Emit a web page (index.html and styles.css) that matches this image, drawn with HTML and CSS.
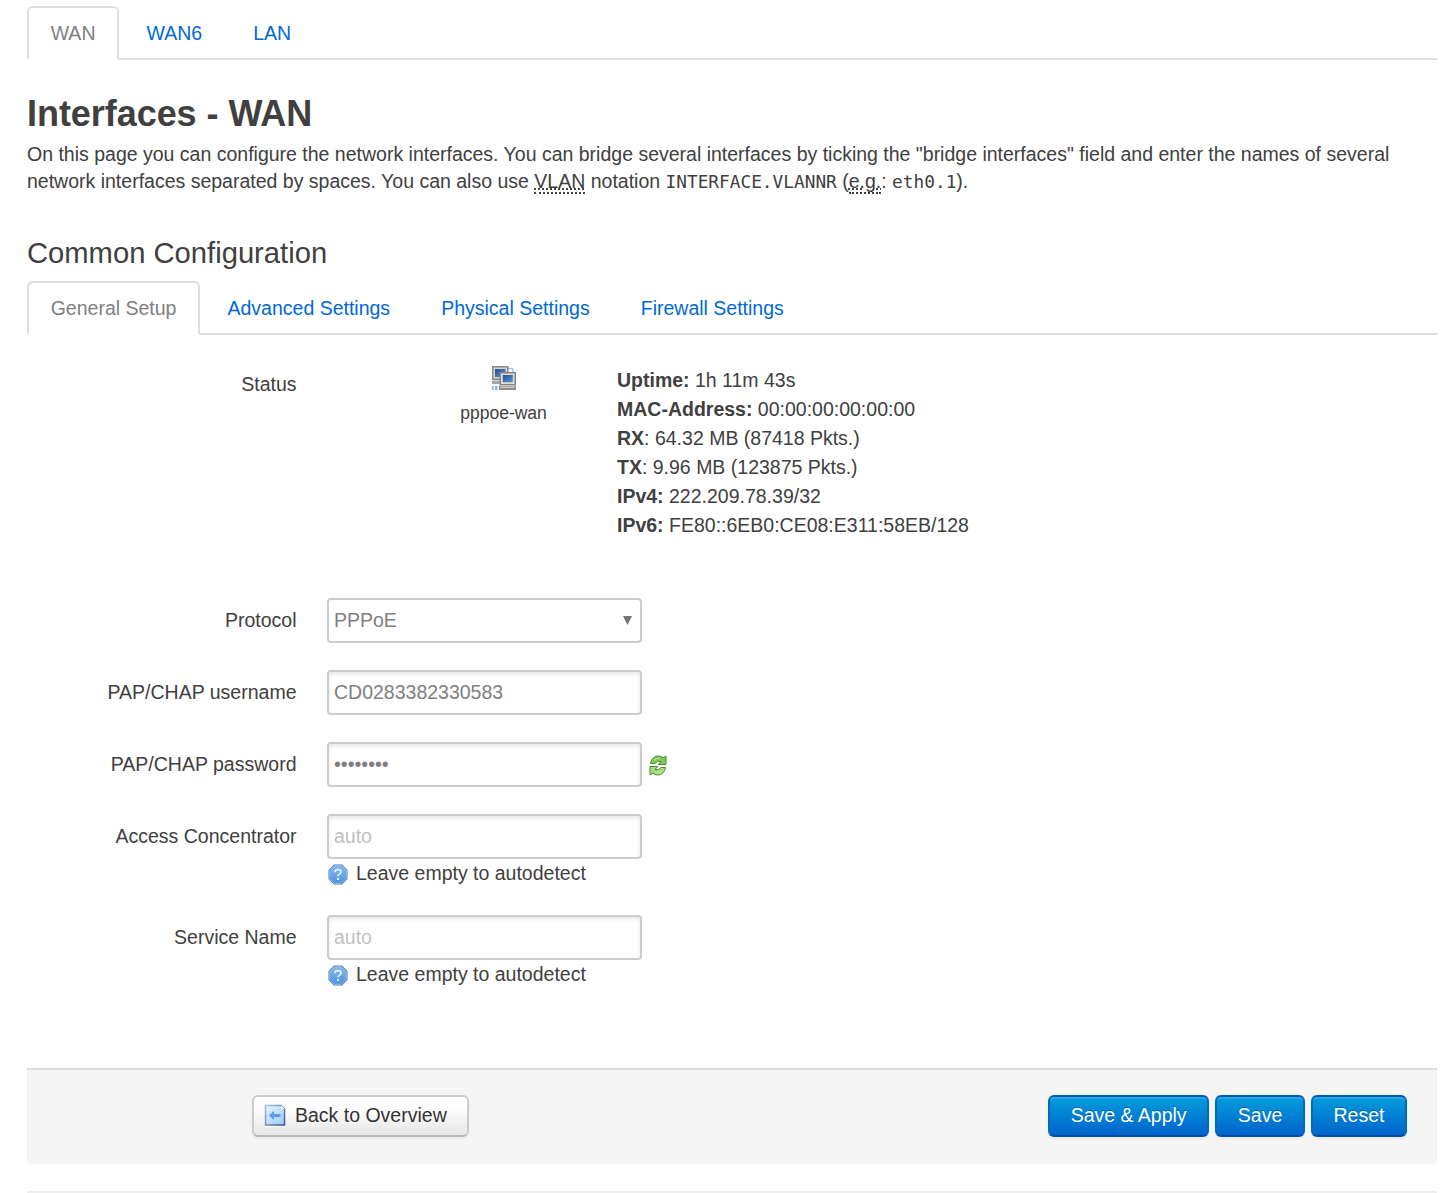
FILE: index.html
```html
<!DOCTYPE html>
<html lang="en">
<head>
<meta charset="utf-8">
<title>Interfaces - WAN</title>
<link rel="stylesheet" href="styles.css">
</head>
<body>
<svg class="sprite" width="0" height="0" aria-hidden="true">
  <symbol id="help" viewBox="0 0 20 21">
    <path d="M6 .5h8L19.500 6v9L14 20.500H6L.5 15V6z" fill="#54779c"/>
    <path d="M6.500 1.700h7L18.300 6.500v8l-4.800 4.800h-7L1.700 14.500v-8z" fill="url(#helpFill)" stroke="#8fc1f0"/>
    <path d="M7 8.200q0-2.500 3-2.500t3 2.300q0 1.500-1.700 2.300-1.300.7-1.300 1.900" fill="none" stroke="#e4f0fd" stroke-width="1.800"/>
    <path d="M9 14h2v2H9z" fill="#e4f0fd"/>
  </symbol>
  <defs>
    <linearGradient id="helpFill" x2="0" y2="1"><stop stop-color="#83b9f1"/><stop offset="1" stop-color="#4f94de"/></linearGradient>
    <linearGradient id="screen" x2="1" y2="1"><stop stop-color="#1f4f94"/><stop offset="1" stop-color="#5c94d6"/></linearGradient>
    <linearGradient id="page" x2="1" y2="1"><stop stop-color="#e8f4ff"/><stop offset="1" stop-color="#9cc9fb"/></linearGradient>
    <linearGradient id="pageEdge" x2="1" y2="1"><stop stop-color="#a9c8e0"/><stop offset="1" stop-color="#35557f"/></linearGradient>
  </defs>
</svg>
<main class="container">
  <ul class="tabs">
    <li class="active"><a>WAN</a></li>
    <li><a>WAN6</a></li>
    <li><a>LAN</a></li>
  </ul>

  <h2>Interfaces - WAN</h2>
  <p class="description">On this page you can configure the network interfaces. You can bridge several interfaces by ticking the "bridge interfaces" field and enter the names of several<br>network interfaces separated by spaces. You can also use <abbr>VLAN</abbr> notation <code>INTERFACE.VLANNR</code> (<abbr>e.g.</abbr>: <code>eth0.1</code>).</p>

  <h3>Common Configuration</h3>
  <ul class="tabs">
    <li class="active"><a>General Setup</a></li>
    <li><a>Advanced Settings</a></li>
    <li><a>Physical Settings</a></li>
    <li><a>Firewall Settings</a></li>
  </ul>

  <form class="form">
    <div class="row status">
      <span class="label">Status</span>
      <div class="device">
        <svg width="24" height="24" viewBox="0 0 24 24">
          <path d="M16 2.500h3.500q1.500 0 1.500 2V7" fill="none" stroke="#9fc1ec" stroke-width="1.500"/>
          <path d="M0 0h16.500v14H0z" fill="#8b8b86"/><path d="M1.500 1.500h13.500v11h-13.500z" fill="#d5d4cd"/>
          <path d="M3 3h10.500v8H3z" fill="url(#screen)"/>
          <path d="M0 14.500h9V18H0z" fill="#aaa9a3"/>
          <path d="M0 20h1.500v4H0zM3 20h2.500v4H3z" fill="#86b2eb"/>
          <path d="M7.500 6H24v13H7.500z" fill="#85857f"/><path d="M9 7.500h13.500v10.500H9z" fill="#dddcd5"/>
          <path d="M10.800 9h10v7.200h-10z" fill="url(#screen)"/>
          <path d="M7 19.500h17V24H7z" fill="#8f8e88"/><path d="M8.500 20.500h14V22h-14z" fill="#cac9c2"/>
        </svg>
        <span>pppoe-wan</span>
      </div>
      <div class="info">
        <div><b>Uptime:</b> 1h 11m 43s</div>
        <div><b>MAC-Address:</b> 00:00:00:00:00:00</div>
        <div><b>RX</b>: 64.32 MB (87418 Pkts.)</div>
        <div><b>TX</b>: 9.96 MB (123875 Pkts.)</div>
        <div><b>IPv4:</b> 222.209.78.39/32</div>
        <div><b>IPv6:</b> FE80::6EB0:CE08:E311:58EB/128</div>
      </div>
    </div>
    <div class="row">
      <span class="label">Protocol</span>
      <div class="field select"><span>PPPoE</span><svg width="9" height="9" viewBox="0 0 9 9"><path d="M0 0h9L4.500 9z" fill="#757575"/></svg></div>
    </div>
    <div class="row">
      <label class="label" for="user">PAP/CHAP username</label>
      <input class="field" id="user" type="text" value="CD0283382330583">
    </div>
    <div class="row">
      <label class="label" for="pass">PAP/CHAP password</label>
      <div class="field"><span class="dots">••••••••</span></div>
      <svg class="reload" width="18" height="21" viewBox="0 0 18 21">
        <path d="M1.500 8.500C2.500 3.500 5.500 1 9.500 1q2.800 0 4.500 1.900L17 1v8.500H9.300l2.700-2.900Q8.500 5 6 8.500z" fill="#7cc957" stroke="#4c8a34"/>
        <path d="M16.500 12.500c-1 5-4 7.500-8 7.500q-2.800 0-4.500-1.900L1 20v-8.500h7.700L6 14.400q3.500 1.600 6-1.900z" fill="#a3de80" stroke="#4c8a34"/>
        <path d="M5 5.500q2-2.800 5.500-2.300M13 16q-2 2.300-5 1.900" fill="none" stroke="#c4eeaa"/>
      </svg>
    </div>
    <div class="row">
      <label class="label" for="ac">Access Concentrator</label>
      <div>
        <input class="field" id="ac" type="text" placeholder="auto">
        <div class="hint"><svg width="20" height="21"><use href="#help"/></svg>Leave empty to autodetect</div>
      </div>
    </div>
    <div class="row">
      <label class="label" for="service">Service Name</label>
      <div>
        <input class="field" id="service" type="text" placeholder="auto">
        <div class="hint"><svg width="20" height="21"><use href="#help"/></svg>Leave empty to autodetect</div>
      </div>
    </div>
  </form>

  <div class="actions">
    <button class="btn" type="button">
      <svg width="22" height="23" viewBox="0 0 22 23">
        <path d="M0 0h22v23H0z" fill="#f4f8fc"/>
        <path d="M1.500 1.500H17L20.500 5v16h-19z" fill="url(#page)" stroke="url(#pageEdge)" stroke-width="1.500"/>
        <path d="M17 1.500V5h3.500z" fill="#fff"/>
        <path d="M5 11.500l5-4.800v3.200h6.500V13H10v3.300z" fill="#5c9cea"/>
      </svg>Back to Overview</button>
    <div class="group">
      <button class="btn primary" type="button">Save &amp; Apply</button>
      <button class="btn primary" type="button">Save</button>
      <button class="btn primary" type="button">Reset</button>
    </div>
  </div>
  <footer></footer>
</main>
</body>
</html>
```
FILE: styles.css
```css
* { box-sizing: border-box; }
body {
  margin: 0;
  background: #fff;
  color: #404040;
  font: 19.5px/27px "Liberation Sans", Arial, sans-serif;
}
.sprite { display: block; }
.container { width: 1410px; margin-left: 27px; padding-top: 6px; }

.tabs {
  display: flex;
  gap: 3.7px;
  height: 54px;
  margin: 0;
  padding: 0;
  list-style: none;
  border-bottom: 2px solid #ddd;
}
.tabs a {
  display: block;
  height: 54px;
  padding: 0 21.7px;
  border: 2px solid transparent;
  border-radius: 6px 6px 0 0;
  line-height: 50px;
  color: #0069d6;
}
.tabs .active a {
  color: #808080;
  background: #fff;
  border-color: #ddd;
  border-bottom-color: #fff;
}

h2 { margin: 27px 0 0; font-size: 36px; letter-spacing: -.05px; line-height: 54px; }
.description { margin: 0; white-space: nowrap; }
abbr { text-decoration: underline dotted; border-bottom: 2px dotted #404040; }
code { font: 17.8px/20px "DejaVu Sans Mono", monospace; }
h3 { margin: 31px 0 1px; font-size: 29.2px; font-weight: 400; line-height: 54px; }

.form { padding-top: 26px; }
.row { display: flex; align-items: flex-start; margin-bottom: 27px; }
.label { width: 269.5px; margin-right: 30.5px; padding-top: 9px; text-align: right; }
.status { height: 210px; }
.device {
  display: flex;
  flex-direction: column;
  align-items: center;
  width: 87px;
  margin: 5px 70px 0 133px;
  font-size: 17.55px;
}
.device span { margin-top: 10px; }
.status .label { padding-top: 10px; }
.info { padding-top: 5px; line-height: 29px; white-space: nowrap; }

.field {
  display: flex;
  align-items: center;
  justify-content: space-between;
  width: 315px;
  height: 45px;
  padding: 0 5px;
  border: 2px solid #ccc;
  border-radius: 4px;
  background: #fff;
  box-shadow: inset 0 2px 4px rgba(0, 0, 0, .1);
  color: #808080;
  font: inherit;
}
.field::placeholder { color: #bfbfbf; opacity: 1; }
.select { box-shadow: none; padding-right: 8px; }
.reload { margin: 13px 0 0 7px; }
.hint { display: flex; align-items: center; gap: 8px; height: 29px; padding-left: 1px; }
.hint svg { margin-top: 2px; }

.actions {
  display: flex;
  justify-content: space-between;
  height: 96px;
  margin-top: 79px;
  padding: 25px 30px 0 225px;
  background: #f5f5f5;
  border-top: 2px solid #ddd;
  border-radius: 0 0 5px 5px;
}
.group { display: flex; gap: 6px; }
.btn {
  display: flex;
  align-items: center;
  gap: 9px;
  height: 42px;
  padding: 0 20px 2px 10px;
  border: 2px solid #ccc;
  border-bottom-color: #bbb;
  border-radius: 6px;
  background: linear-gradient(#fff, #fff 25%, #e6e6e6);
  box-shadow: 0 2px 3px rgba(0, 0, 0, .05);
  color: #333;
  font: inherit;
  white-space: nowrap;
}
.primary {
  padding: 0 20.6px 2px;
  border-color: #0059b3 #006bbd #0050a0;
  background: linear-gradient(#049cdb, #0064cd);
  box-shadow: inset 0 2px 0 rgba(255, 255, 255, .15), 0 2px 3px rgba(0, 0, 0, .05);
  color: #fff;
  text-shadow: 0 -1px 0 rgba(0, 0, 0, .25);
}
footer { margin-top: 27px; border-top: 2px solid #eee; }
```
